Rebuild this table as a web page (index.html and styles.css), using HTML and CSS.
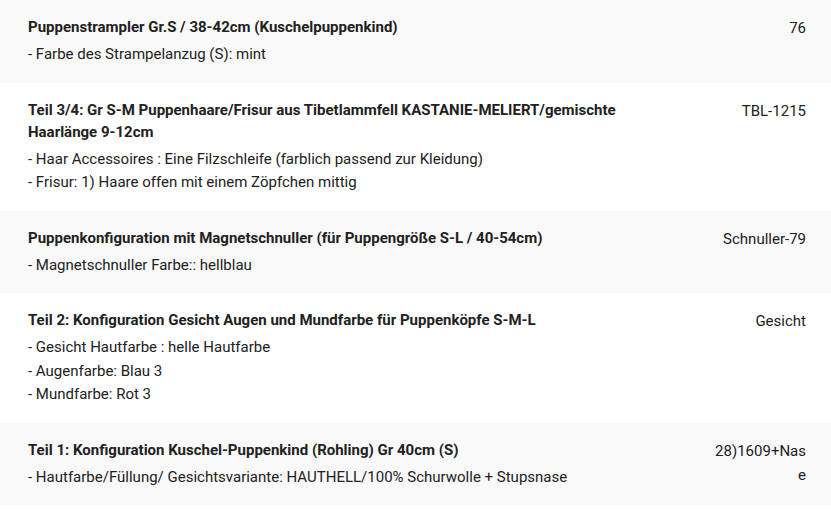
FILE: index.html
```html
<!DOCTYPE html>
<html lang="de">
<head>
<meta charset="utf-8">
<link rel="stylesheet" href="styles.css">
</head>
<body>
<div class="items">
  <div class="row">
    <div class="desc">
      <div class="title">Puppenstrampler Gr.S / 38-42cm (Kuschelpuppenkind)</div>
      <div class="attrs">
        <div>- Farbe des Strampelanzug (S): mint</div>
      </div>
    </div>
    <div class="sku">76</div>
  </div>
  <div class="row">
    <div class="desc">
      <div class="title">Teil 3/4: Gr S-M Puppenhaare/Frisur aus Tibetlammfell KASTANIE-MELIERT/gemischte Haarlänge 9-12cm</div>
      <div class="attrs">
        <div>- Haar Accessoires : Eine Filzschleife (farblich passend zur Kleidung)</div>
        <div>- Frisur: 1) Haare offen mit einem Zöpfchen mittig</div>
      </div>
    </div>
    <div class="sku">TBL-1215</div>
  </div>
  <div class="row">
    <div class="desc">
      <div class="title">Puppenkonfiguration mit Magnetschnuller (für Puppengröße S-L / 40-54cm)</div>
      <div class="attrs">
        <div>- Magnetschnuller Farbe:: hellblau</div>
      </div>
    </div>
    <div class="sku">Schnuller-79</div>
  </div>
  <div class="row">
    <div class="desc">
      <div class="title">Teil 2: Konfiguration Gesicht Augen und Mundfarbe für Puppenköpfe S-M-L</div>
      <div class="attrs">
        <div>- Gesicht Hautfarbe : helle Hautfarbe</div>
        <div>- Augenfarbe: Blau 3</div>
        <div>- Mundfarbe: Rot 3</div>
      </div>
    </div>
    <div class="sku">Gesicht</div>
  </div>
  <div class="row">
    <div class="desc">
      <div class="title">Teil 1: Konfiguration Kuschel-Puppenkind (Rohling) Gr 40cm (S)</div>
      <div class="attrs">
        <div>- Hautfarbe/Füllung/ Gesichtsvariante: HAUTHELL/100% Schurwolle + Stupsnase</div>
      </div>
    </div>
    <div class="sku">28)1609+Nase</div>
  </div>
</div>
</body>
</html>
```
FILE: styles.css
```css
html, body {
  margin: 0;
  padding: 0;
  background: #ffffff;
}
body {
  font-family: Roboto, "Liberation Sans", Arial, sans-serif;
  font-size: 15px;
  line-height: 23.5px;
  color: #212121;
}
.items {
  display: flex;
  flex-direction: column;
}
.row {
  display: grid;
  grid-template-columns: 1fr 95px;
  column-gap: 40px;
  padding: 16px 25px 16px 28px;
}
.row:nth-child(odd) {
  background: #f9f9f9;
}
.title {
  font-weight: 700;
  line-height: 22px;
  margin-bottom: 5px;
}
.sku {
  text-align: right;
  line-height: 24px;
  overflow-wrap: anywhere;
}
```
